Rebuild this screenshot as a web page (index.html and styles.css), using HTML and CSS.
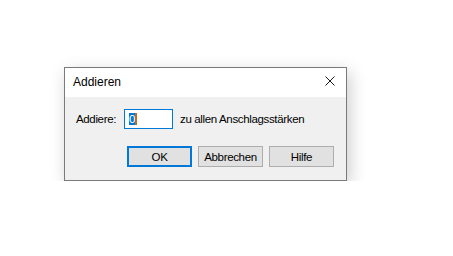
FILE: index.html
```html
<!DOCTYPE html>
<html>
<head>
<meta charset="utf-8">
<link rel="stylesheet" href="styles.css">
</head>
<body>
<div class="dialog">
  <div class="titlebar">
    <span class="title">Addieren</span>
    <svg class="close" width="10" height="10" viewBox="0 0 10 10">
      <path d="M0.5 0.5 L9.5 9.5 M9.5 0.5 L0.5 9.5" stroke="#1a1a1a" stroke-width="1" fill="none"/>
    </svg>
  </div>
  <div class="content">
    <div class="row">
      <span class="label">Addiere:</span>
      <div class="input"><span class="sel">0</span><span class="caret"></span></div>
      <span class="after">zu allen Anschlagsstärken</span>
    </div>
    <div class="buttons">
      <button class="btn default">OK</button>
      <button class="btn">Abbrechen</button>
      <button class="btn">Hilfe</button>
    </div>
  </div>
</div>
</body>
</html>
```
FILE: styles.css
```css
html, body {
  margin: 0;
  background: #ffffff;
}
body {
  padding: 67px 0 0 64px;
  font-family: "Liberation Sans", Arial, sans-serif;
  font-size: 11.5px;
  letter-spacing: -0.35px;
  color: #000;
}
.dialog {
  width: 281px;
  border: 1px solid #7a7a7a;
  background: #f0f0f0;
  box-shadow: 3px 5px 16px rgba(0,0,0,0.2);
}
.titlebar {
  height: 29px;
  background: #ffffff;
  display: flex;
  align-items: center;
  justify-content: space-between;
  padding: 0 11px 0 8px;
}
.title {
  font-size: 12px;
  letter-spacing: 0;
  margin-top: -1px;
}
.close {
  display: block;
  margin-top: -3px;
}
.content {
  padding: 12px 12px 13px 11px;
}
.row {
  display: flex;
  align-items: center;
  height: 20px;
}
.label {
  width: 48px;
}
.input {
  box-sizing: border-box;
  width: 49px;
  height: 20px;
  border: 1px solid #0078d7;
  background: #fff;
  display: flex;
  align-items: center;
  padding-left: 4px;
}
.sel {
  background: #0078d7;
  color: #fff;
  height: 12px;
  line-height: 12px;
  width: 6px;
  text-align: center;
  letter-spacing: 0;
}
.caret {
  width: 2px;
  height: 12px;
  background: #c36b1b;
}
.after {
  margin-left: 7px;
}
.buttons {
  display: flex;
  justify-content: flex-end;
  gap: 6px;
  margin-top: 17px;
}
.btn {
  box-sizing: border-box;
  width: 65px;
  height: 21px;
  border: 1px solid #adadad;
  background: #e1e1e1;
  font-family: "Liberation Sans", Arial, sans-serif;
  font-size: 11.5px;
  letter-spacing: -0.35px;
  color: #000;
  padding: 0;
}
.btn.default {
  border: 2px solid #0078d7;
}
```
